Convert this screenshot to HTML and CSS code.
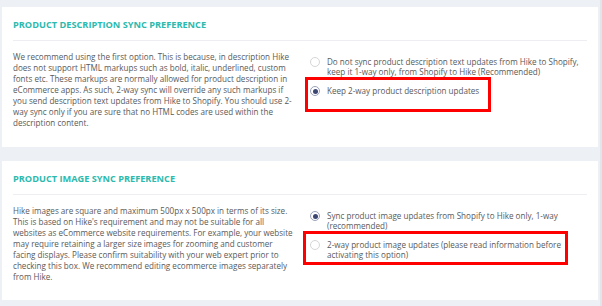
FILE: index.html
```html
<!DOCTYPE html>
<html lang="en">
<head>
  <meta charset="UTF-8" />
  <title>Sync Preferences</title>
  <link rel="stylesheet" href="styles.css">
</head>
<body>
  <div class="page">
    <!-- Description sync -->
    <section class="card card-desc">
      <h2 class="card-title">Product Description Sync Preference</h2>
      <div class="card-body">
        <p class="info">We recommend using the first option. This is because, in description Hike does not support HTML markups such as bold, italic, underlined, custom fonts etc. These markups are normally allowed for product description in eCommerce apps. As such, 2-way sync will override any such markups if you send description text updates from Hike to Shopify. You should use 2-way sync only if you are sure that no HTML codes are used within the description content.</p>
        <div class="options">
          <label class="option">
            <span class="radio"></span>
            <span class="option-text">Do not sync product description text updates from Hike to Shopify, keep it 1-way only, from Shopify to Hike (Recommended)</span>
          </label>
          <label class="option">
            <span class="radio checked"></span>
            <span class="option-text">Keep 2-way product description updates</span>
            <span class="mark mark-desc"></span>
          </label>
        </div>
      </div>
    </section>

    <!-- Image sync -->
    <section class="card card-img">
      <h2 class="card-title">Product Image Sync Preference</h2>
      <div class="card-body">
        <p class="info">Hike images are square and maximum 500px x 500px in terms of its size. This is based on Hike's requirement and may not be suitable for all websites as eCommerce website requirements. For example, your website may require retaining a larger size images for zooming and customer facing displays. Please confirm suitability with your web expert prior to checking this box. We recommend editing ecommerce images separately from Hike.</p>
        <div class="options">
          <label class="option">
            <span class="radio checked"></span>
            <span class="option-text">Sync product image updates from Shopify to Hike only, 1-way (recommended)</span>
          </label>
          <label class="option">
            <span class="radio"></span>
            <span class="option-text">2-way product image updates (please read information before activating this option)</span>
            <span class="mark mark-img"></span>
          </label>
        </div>
      </div>
    </section>
  </div>
</body>
</html>
```

FILE: styles.css
```css
html, body {
  margin: 0;
  height: 100%;
}

body {
  font-family: 'Open Sans', 'Noto Sans', sans-serif;
  background: #edf0f5;
  color: #595959;
}

.page {
  display: flex;
  flex-direction: column;
  gap: 14px;
  padding: 7px 2px 0 2px;
  border-right: 2px solid #e2e5ea;
  height: 100%;
  box-sizing: border-box;
}

.card {
  background: #fff;
  padding: 0 11px;
}

.card-desc {
  height: 140px;
}

.card-img {
  height: 139px;
}

.card-title {
  margin: 0;
  padding: 12px 0 9px;
  line-height: 12px;
  font-size: 9.2px;
  font-weight: 700;
  text-transform: uppercase;
  color: #2cbaae;
  border-bottom: 1px solid #eceef1;
}

.card-body {
  display: flex;
  gap: 16px;
  padding-top: 10px;
}

.info {
  margin: 0;
  width: 281px;
  flex: none;
  font-size: 8.1px;
  line-height: 11px;
}

.options {
  flex: 1;
  display: flex;
  flex-direction: column;
  gap: 9px;
  padding-top: 6px;
}

.option {
  position: relative;
  display: flex;
  align-items: flex-start;
  gap: 7px;
  font-size: 8.1px;
  line-height: 10px;
}

.radio {
  flex: none;
  width: 8px;
  height: 8px;
  border: 1px solid #d6d6d6;
  border-radius: 50%;
  background: #fff;
  display: flex;
  align-items: center;
  justify-content: center;
}

.radio.checked {
  border-color: #9aa2b8;
}

.radio.checked::after {
  content: "";
  width: 5px;
  height: 5px;
  border-radius: 50%;
  background: #3b4672;
}

.mark {
  position: absolute;
  box-sizing: border-box;
  border: 3px solid #f00;
}

.mark-desc {
  left: -5px;
  top: -9px;
  width: 186px;
  height: 35px;
}

.mark-img {
  left: -7px;
  top: -9px;
  width: 265px;
  height: 34px;
}
```
